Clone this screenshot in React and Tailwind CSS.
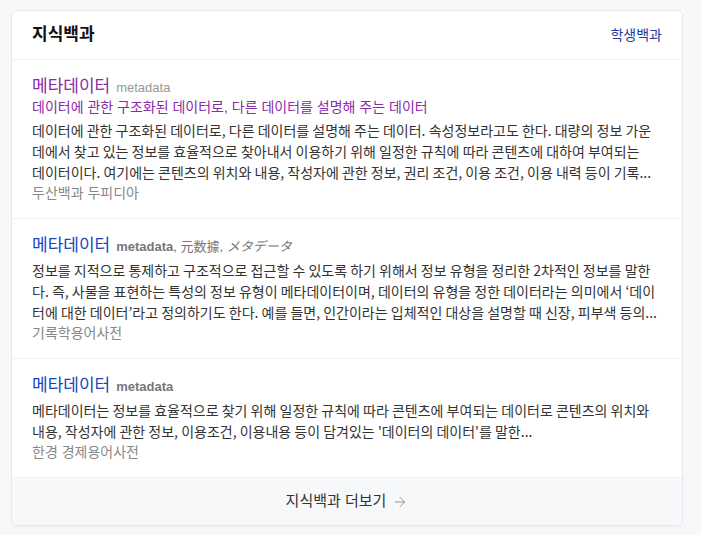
import React from 'react';
import { ArrowRight } from 'lucide-react';

const FONT = { fontFamily: '"Liberation Sans", "Noto Sans CJK KR", sans-serif' };
const KR = { fontFamily: '"Noto Sans CJK KR", "Liberation Sans", sans-serif' };

const entries = [
  {
    id: 1,
    title: '메타데이터',
    titleColor: 'text-[#8a2aa8]',
    sub: <span className="text-[13px] text-[#999]">metadata</span>,
    summary: '데이터에 관한 구조화된 데이터로, 다른 데이터를 설명해 주는 데이터',
    body:
      '데이터에 관한 구조화된 데이터로, 다른 데이터를 설명해 주는 데이터. 속성정보라고도 한다. 대량의 정보 가운데에서 찾고 있는 정보를 효율적으로 찾아내서 이용하기 위해 일정한 규칙에 따라 콘텐츠에 대하여 부여되는 데이터이다. 여기에는 콘텐츠의 위치와 내용, 작성자에 관한 정보, 권리 조건, 이용 조건, 이용 내력 등이 기록...',
    bodyClass: 'pr-[10px]',
    source: '두산백과 두피디아',
  },
  {
    id: 2,
    title: '메타데이터',
    titleColor: 'text-[#1546c4]',
    sub: (
      <span className="text-[13px] text-[#777]">
        <b className="font-bold">metadata</b>, 元数據,{' '}
        <i style={{ fontFamily: '"Noto Sans CJK JP", sans-serif' }}>メタデータ</i>
      </span>
    ),
    body:
      '정보를 지적으로 통제하고 구조적으로 접근할 수 있도록 하기 위해서 정보 유형을 정리한 2차적인 정보를 말한다. 즉, 사물을 표현하는 특성의 정보 유형이 메타데이터이며, 데이터의 유형을 정한 데이터라는 의미에서 ‘데이터에 대한 데이터’라고 정의하기도 한다. 예를 들면, 인간이라는 입체적인 대상을 설명할 때 신장, 피부색 등의...',
    bodyClass: '',
    source: '기록학용어사전',
  },
  {
    id: 3,
    title: '메타데이터',
    titleColor: 'text-[#1546c4]',
    sub: <b className="text-[13px] font-bold text-[#777]">metadata</b>,
    body:
      "메타데이터는 정보를 효율적으로 찾기 위해 일정한 규칙에 따라 콘텐츠에 부여되는 데이터로 콘텐츠의 위치와 내용, 작성자에 관한 정보, 이용조건, 이용내용 등이 담겨있는 '데이터의 데이터'를 말한...",
    bodyClass: '',
    source: '한경 경제용어사전',
  },
];

export default function App() {
  return (
    <div className="min-h-[535px] bg-[#f7f8fa] pt-[10px] pl-[11px]" style={FONT}>
      <div className="w-[672px] overflow-hidden rounded-[6px] border border-[#e6e8eb] bg-white shadow-[0_1px_2px_rgba(0,0,0,0.04)]">
        {/* header */}
        <div className="flex h-[49px] items-center justify-between border-b border-[#eef0f2] px-[20px]">
          <h2 className="text-[17px] font-bold text-[#111]">지식백과</h2>
          <span className="text-[14px] text-[#1f3aa0]">학생백과</span>
        </div>

        {/* entries */}
        {entries.map((e) => (
          <div key={e.id} className="border-b border-[#f0f1f3] px-[20px] pt-[17px] pb-[14px]">
            <div className="flex items-baseline gap-[6px] leading-[20px]">
              <span className={`text-[17px] ${e.titleColor}`}>{e.title}</span>
              {e.sub}
            </div>
            {e.summary ? (
              <p className="mb-[4px] text-[14px] leading-[18px] text-[#8a2aa8]">{e.summary}</p>
            ) : (
              <div className="h-[3px]" />
            )}
            <p className={`text-[14px] leading-[21px] text-[#333] ${e.bodyClass}`} style={KR}>
              {e.body}
            </p>
            <p className="text-[14px] leading-[21px] text-[#888]">{e.source}</p>
          </div>
        ))}

        {/* footer */}
        <div className="flex h-[47px] items-center justify-center gap-[6px] bg-[#f7f8fa] text-[15px] text-[#333]">
          지식백과 더보기
          <ArrowRight size={16} strokeWidth={1.5} className="text-[#999]" />
        </div>
      </div>
    </div>
  );
}
